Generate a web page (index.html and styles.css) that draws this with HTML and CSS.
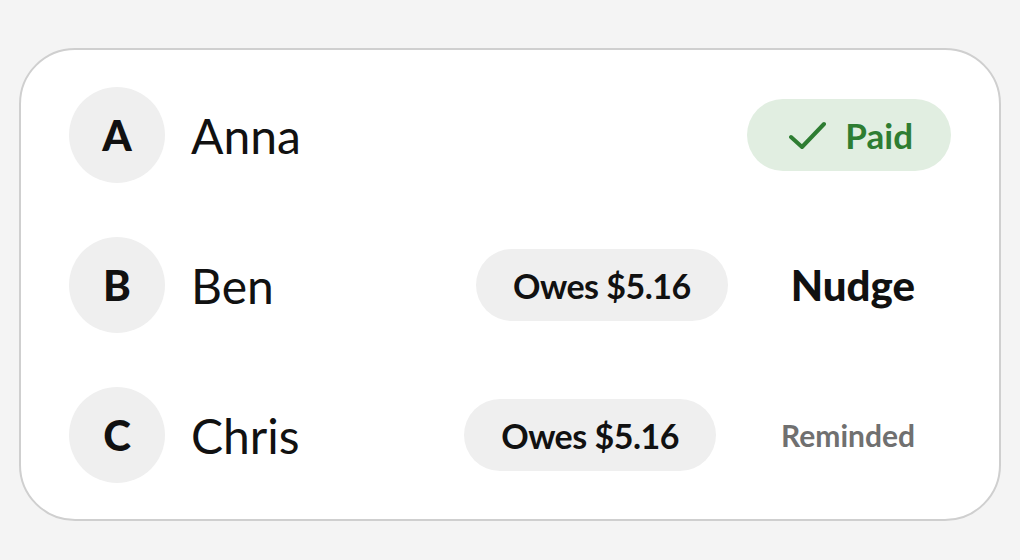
FILE: index.html
```html
<!DOCTYPE html>
<html lang="en">
<head>
  <meta charset="UTF-8">
  <title>Split status</title>
  <link rel="stylesheet" href="styles.css">
</head>
<body>
  <div class="card">
    <div class="row">
      <div class="avatar">A</div>
      <div class="name">Anna</div>
      <div class="pill paid">
        <svg class="check" width="38" height="38" viewBox="0 0 38 38">
          <polyline points="3,23 14,33 36,10" fill="none" stroke="#2e7d32" stroke-width="4" stroke-linecap="round" stroke-linejoin="round"/>
        </svg>
        Paid
      </div>
    </div>

    <div class="row">
      <div class="avatar">B</div>
      <div class="name">Ben</div>
      <div class="pill owes">Owes $5.16</div>
      <button class="action nudge">Nudge</button>
    </div>

    <div class="row">
      <div class="avatar">C</div>
      <div class="name">Chris</div>
      <div class="pill owes">Owes $5.16</div>
      <button class="action reminded">Reminded</button>
    </div>
  </div>
</body>
</html>
```

FILE: styles.css
```css
body {
  margin: 0;
  background: #f4f4f4;
  font-family: 'Lato', 'Noto Sans', sans-serif;
  color: #111;
  padding: 48px 19px 0 19px;
}

.card {
  width: 982px;
  box-sizing: border-box;
  background: #fff;
  border: 2px solid #cfcfcf;
  border-radius: 56px;
  padding: 37px 48px 36px 48px;
  display: flex;
  flex-direction: column;
  gap: 54px;
}

.row {
  display: flex;
  align-items: center;
  height: 96px;
}

.avatar {
  width: 96px;
  height: 96px;
  border-radius: 50%;
  background: #efefef;
  display: flex;
  align-items: center;
  justify-content: center;
  font-size: 42px;
  font-weight: 900;
  flex-shrink: 0;
}

.name {
  flex: 1;
  margin-left: 26px;
  font-size: 48px;
  font-weight: 400;
}

.pill {
  display: flex;
  align-items: center;
  border-radius: 36px;
  height: 72px;
  box-sizing: border-box;
  font-weight: 700;
  font-size: 35px;
}

.paid {
  background: #e1eee1;
  color: #2e7d32;
  padding: 0 38px 0 41px;
  gap: 19px;
}

.check {
  margin-top: -4px;
}

.owes {
  background: #efefef;
  padding: 0 37px;
  font-size: 34px;
  letter-spacing: -0.5px;
}

.action {
  border: none;
  background: none;
  font-family: inherit;
  font-weight: 900;
  padding: 0 36px;
  margin-left: 27px;
  cursor: pointer;
}

.nudge {
  font-size: 42px;
  color: #111;
}

.reminded {
  font-size: 30px;
  font-weight: 700;
  color: #707070;
  margin-left: 29px;
}
```
